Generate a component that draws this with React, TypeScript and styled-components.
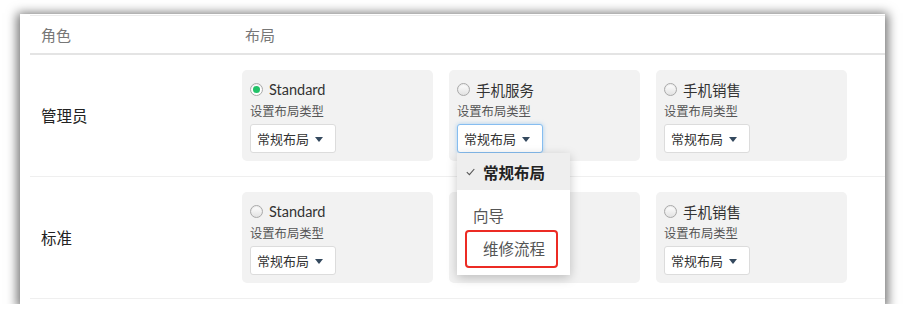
import React from 'react';
import styled, { createGlobalStyle, css } from 'styled-components';

const GlobalStyle = createGlobalStyle`
  body {
    margin: 0;
    background: #ffffff;
    font-family: Lato, "Noto Sans CJK SC", sans-serif;
  }
`;

const Panel = styled.div`
  margin: 14px 0 0 20px;
  width: 865px;
  height: 290px;
  box-sizing: border-box;
  padding: 1px 0 5px 10px;
  background: #ffffff;
  box-shadow: 0 2px 10px 3px rgba(0, 0, 0, 0.55);
`;

const Table = styled.div`
  border-top: 1px solid #ececec;
`;

const HeaderRow = styled.div`
  display: flex;
  align-items: center;
  height: 37px;
  border-bottom: 2px solid #e4e4e4;
  color: #777777;
  font-size: 15px;
`;

const RoleHead = styled.div`
  width: 212px;
  box-sizing: border-box;
  padding-left: 11px;
`;

const LayoutHead = styled.div`
  padding-left: 3px;
`;

const Row = styled.div`
  display: flex;
  align-items: center;
  height: 121px;
  border-bottom: 1px solid #efefef;
`;

const RoleName = styled.div`
  width: 212px;
  box-sizing: border-box;
  padding-left: 11px;
  padding-bottom: 2px;
  font-size: 15.5px;
  color: #222222;
`;

const Cards = styled.div`
  display: flex;
  gap: 16px;
`;

const Card = styled.div<{ $raised?: boolean }>`
  position: relative;
  width: 191px;
  height: 91px;
  box-sizing: border-box;
  padding: 9px 7px 8px 8px;
  border-radius: 5px;
  background: #f2f2f2;
  z-index: ${(p) => (p.$raised ? 5 : 1)};
`;

const RadioLine = styled.label`
  display: flex;
  align-items: center;
  gap: 6px;
  height: 20px;
  margin-bottom: 4px;
  font-size: 14.5px;
  color: #333333;
`;

const Radio = styled.span<{ $checked?: boolean }>`
  display: inline-flex;
  align-items: center;
  justify-content: center;
  width: 13px;
  height: 13px;
  box-sizing: border-box;
  border-radius: 50%;
  border: 1px solid #a9a9a9;
  background: linear-gradient(#ffffff, #e2e2e2);
  box-shadow: inset 0 1px 1px rgba(0, 0, 0, 0.08);

  ${(p) =>
    p.$checked &&
    css`
      background: #ffffff;
      &::after {
        content: '';
        width: 7px;
        height: 7px;
        border-radius: 50%;
        background: #22c268;
      }
    `}
`;

const FieldLabel = styled.div`
  height: 18px;
  line-height: 18px;
  margin-bottom: 3px;
  font-size: 12.3px;
  color: #555555;
`;

const SelectWrap = styled.div`
  position: relative;
  width: 86px;
`;

const Select = styled.div<{ $focused?: boolean }>`
  display: flex;
  align-items: center;
  gap: 6px;
  width: 86px;
  height: 29px;
  box-sizing: border-box;
  padding-left: 6px;
  border: 1px solid #dcdcdc;
  border-radius: 3px;
  background: #ffffff;
  font-size: 13px;
  color: #333333;

  ${(p) =>
    p.$focused &&
    css`
      border-color: #86bdf0;
      box-shadow: 0 0 4px rgba(102, 175, 233, 0.55);
    `}
`;

const Caret = styled.span`
  width: 0;
  height: 0;
  margin-top: 1px;
  border-left: 4px solid transparent;
  border-right: 4px solid transparent;
  border-top: 5px solid #34495e;
`;

const Menu = styled.div`
  position: absolute;
  top: 100%;
  left: 0;
  width: 113px;
  padding-bottom: 11px;
  background: #ffffff;
  box-shadow: 0 3px 10px rgba(0, 0, 0, 0.22);
  z-index: 10;
`;

const MenuItem = styled.div<{ $active?: boolean; $indent: number }>`
  position: relative;
  display: flex;
  align-items: center;
  height: 33px;
  padding-left: ${(p) => p.$indent}px;
  font-size: 15.5px;
  color: #555555;

  ${(p) =>
    p.$active &&
    css`
      height: 37px;
      margin-bottom: 8px;
      background: #eeeeee;
      font-weight: bold;
      color: #222222;
    `}
`;

const Check = styled.svg`
  width: 9px;
  height: 8px;
  margin-right: 8px;
`;

const RedMark = styled.div`
  position: absolute;
  left: 8px;
  top: -1px;
  width: 93px;
  height: 38px;
  box-sizing: border-box;
  border: 2.5px solid #ec2b24;
  border-radius: 4px;
`;

type CardData = { name: string; checked?: boolean; covered?: boolean };

const rows: { role: string; cards: CardData[] }[] = [
  {
    role: '管理员',
    cards: [{ name: 'Standard', checked: true }, { name: '手机服务' }, { name: '手机销售' }],
  },
  {
    role: '标准',
    cards: [{ name: 'Standard' }, { name: '手机服务', covered: true }, { name: '手机销售' }],
  },
];

const LayoutCard = ({ card, open }: { card: CardData; open?: boolean }) => {
  // the card under the open menu is hidden in the screenshot
  if (card.covered) return <Card />;

  return (
    <Card $raised={open}>
      <RadioLine>
        <Radio $checked={card.checked} />
        {card.name}
      </RadioLine>
      <FieldLabel>设置布局类型</FieldLabel>
      <SelectWrap>
        <Select $focused={open}>
          常规布局
          <Caret />
        </Select>
        {open && (
          <Menu>
            <MenuItem $active $indent={9}>
              <Check viewBox="0 0 9 8">
                <path d="M0.8 4.2 L3.4 6.6 L8.3 1" fill="none" stroke="#555" strokeWidth="1.1" />
              </Check>
              常规布局
            </MenuItem>
            <MenuItem $indent={16}>向导</MenuItem>
            <MenuItem $indent={26}>
              维修流程
              <RedMark />
            </MenuItem>
          </Menu>
        )}
      </SelectWrap>
    </Card>
  );
};

const App = () => {
  return (
    <>
      <GlobalStyle />
      <Panel>
        <Table>
          <HeaderRow>
            <RoleHead>角色</RoleHead>
            <LayoutHead>布局</LayoutHead>
          </HeaderRow>
          {rows.map((row, ri) => (
            <Row key={row.role}>
              <RoleName>{row.role}</RoleName>
              <Cards>
                {row.cards.map((card, ci) => (
                  <LayoutCard key={card.name} card={card} open={ri === 0 && ci === 1} />
                ))}
              </Cards>
            </Row>
          ))}
        </Table>
      </Panel>
    </>
  );
};

export default App;
